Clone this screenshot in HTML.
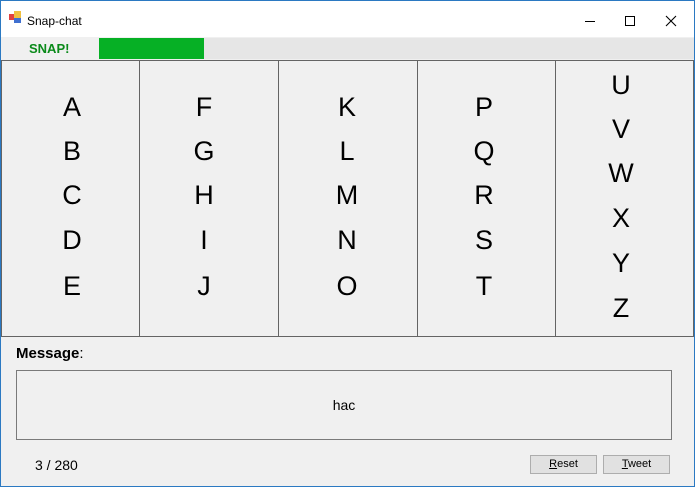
<!DOCTYPE html>
<html><head><style>
body{margin:0;width:695px;height:494px;background:#fff;font-family:"Liberation Sans",sans-serif;position:relative;overflow:hidden}
.a{position:absolute}
.win{left:0;top:0;width:693px;height:485px;border:1px solid #2b79c2;background:#f0f0f0}
.col{position:absolute;top:60px;height:277px;border:1px solid #646464;box-sizing:border-box}
.L{position:absolute;font-size:27px;color:#000;width:60px;text-align:center;line-height:30px}
.btn{position:absolute;top:455px;height:19px;width:67px;box-sizing:border-box;border:1px solid #adadad;background:#e1e1e1;font-size:11px;text-align:center;line-height:17px}
</style></head><body>
<div class="a win"></div>
<div class="a" style="left:1px;top:1px;width:693px;height:36px;background:#fff"></div>
<div class="a" style="left:9px;top:14px;width:6px;height:6px;background:#e04040"></div>
<div class="a" style="left:14px;top:11px;width:7px;height:7px;background:#f0c040"></div>
<div class="a" style="left:14px;top:18px;width:7px;height:5px;background:#4070d0"></div>
<div class="a" style="left:27px;top:14px;font-size:12px">Snap-chat</div>
<div class="a" style="left:585px;top:21px;width:10px;height:1px;background:#000"></div>
<div class="a" style="left:625px;top:16px;width:8px;height:8px;border:1px solid #000"></div>
<svg class="a" style="left:665px;top:15px" width="12" height="12"><path d="M1 1L11 11M11 1L1 11" stroke="#000" stroke-width="1.1"/></svg>
<div class="a" style="left:1px;top:37px;width:693px;height:22px;background:#f0f0f0"></div>
<div class="a" style="left:29px;top:41px;font-size:13px;font-weight:bold;color:#0a8a1a">SNAP!</div>
<div class="a" style="left:99px;top:38px;width:595px;height:21px;background:#e6e6e6"></div>
<div class="a" style="left:99px;top:38px;width:105px;height:21px;background:#06b025"></div>
<div class="col" style="left:1px;width:139px"></div>
<div class="col" style="left:139px;width:140px"></div>
<div class="col" style="left:278px;width:140px"></div>
<div class="col" style="left:417px;width:139px"></div>
<div class="col" style="left:555px;width:139px"></div>
<div class="L" style="left:42px;top:92px">A</div><div class="L" style="left:42px;top:136px">B</div><div class="L" style="left:42px;top:180px">C</div><div class="L" style="left:42px;top:225px">D</div><div class="L" style="left:42px;top:271px">E</div>
<div class="L" style="left:174px;top:92px">F</div><div class="L" style="left:174px;top:136px">G</div><div class="L" style="left:174px;top:180px">H</div><div class="L" style="left:174px;top:225px">I</div><div class="L" style="left:174px;top:271px">J</div>
<div class="L" style="left:317px;top:92px">K</div><div class="L" style="left:317px;top:136px">L</div><div class="L" style="left:317px;top:180px">M</div><div class="L" style="left:317px;top:225px">N</div><div class="L" style="left:317px;top:271px">O</div>
<div class="L" style="left:454px;top:92px">P</div><div class="L" style="left:454px;top:136px">Q</div><div class="L" style="left:454px;top:180px">R</div><div class="L" style="left:454px;top:225px">S</div><div class="L" style="left:454px;top:271px">T</div>
<div class="L" style="left:591px;top:70px">U</div><div class="L" style="left:591px;top:114px">V</div><div class="L" style="left:591px;top:158px">W</div><div class="L" style="left:591px;top:203px">X</div><div class="L" style="left:591px;top:248px">Y</div><div class="L" style="left:591px;top:293px">Z</div>
<div class="a" style="left:16px;top:345px;font-size:15px;font-weight:bold">Message<span style="font-weight:normal">:</span></div>
<div class="a" style="left:16px;top:370px;width:656px;height:70px;box-sizing:border-box;border:1px solid #7a7a7a;background:#f0f0f0;text-align:center;line-height:68px;font-size:14px">hac</div>
<div class="a" style="left:35px;top:457px;font-size:14px">3 / 280</div>
<div class="btn" style="left:530px"><u>R</u>eset</div>
<div class="btn" style="left:603px"><u>T</u>weet</div>
</body></html>
